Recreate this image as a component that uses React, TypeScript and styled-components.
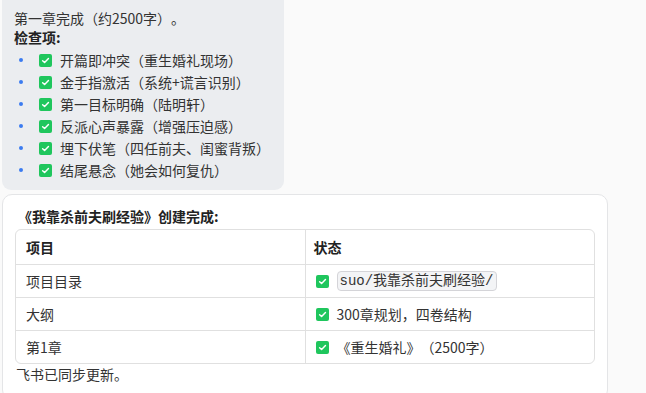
import React from "react";
import styled, { createGlobalStyle } from "styled-components";

const Global = createGlobalStyle`
  html, body { margin: 0; padding: 0; background: #fafafa; }
  body {
    font-family: "Noto Sans CJK SC", "Noto Sans", sans-serif;
    font-size: 14px;
    color: #333;
    text-spacing-trim: space-all;
  }
`;

const Page = styled.div`
  display: flex;
  flex-direction: column;
  align-items: flex-start;
  padding: 0 0 0 2px;
  gap: 4px;
  width: 646px;
  height: 393px;
  overflow: hidden;
  box-sizing: border-box;
`;

const Bubble = styled.div`
  width: 282px;
  box-sizing: border-box;
  background: #ebedf0;
  border-radius: 0 0 9px 9px;
  padding: 9px 12px 9px 12px;
`;

const Para = styled.div<{ $bold?: boolean }>`
  line-height: 19px;
  font-weight: ${(p) => (p.$bold ? 700 : 400)};
  color: ${(p) => (p.$bold ? "#222" : "#333")};
  white-space: nowrap;
`;

const List = styled.ul`
  list-style: none;
  margin: 2px 0 0 0;
  padding: 0;
`;

const Item = styled.li`
  display: flex;
  align-items: center;
  height: 22px;
  white-space: nowrap;
`;

const Bullet = styled.span`
  width: 4px;
  height: 4px;
  border-radius: 50%;
  background: #3b7bf0;
  margin: 0 16px 0 5px;
  flex: none;
`;

const CheckBox = styled.span`
  display: inline-flex;
  align-items: center;
  justify-content: center;
  width: 13px;
  height: 13px;
  border-radius: 2px;
  background: #1fc65d;
  flex: none;
  margin-right: 8px;
`;

const Card = styled.div`
  width: 606px;
  box-sizing: border-box;
  background: #fff;
  border: 1px solid #e4e5e7;
  border-radius: 10px;
  padding: 10px 12px 14px 12px;
  flex: none;
`;

const Heading = styled.div`
  font-weight: 700;
  color: #222;
  line-height: 22px;
  margin: 0 0 2px 3px;
`;

const TableWrap = styled.div`
  border: 1px solid #e0e0e0;
  border-radius: 6px;
  overflow: hidden;
`;

const Table = styled.table`
  width: 100%;
  border-collapse: collapse;
  table-layout: fixed;
`;

const Th = styled.th`
  text-align: left;
  font-weight: 700;
  color: #222;
  height: 34px;
  padding: 0 10px;
  border-bottom: 1px solid #e0e0e0;
  & + & { border-left: 1px solid #e0e0e0; padding-left: 8px; }
`;

const Td = styled.td`
  height: 32px;
  padding: 0 10px;
  color: #333;
  border-top: 1px solid #e0e0e0;
  & + & { border-left: 1px solid #e0e0e0; }
`;

const Cell = styled.div`
  display: flex;
  align-items: center;
  white-space: nowrap;
`;

const Code = styled.code`
  font-family: "Liberation Mono", "Noto Sans CJK SC", monospace;
  font-size: 14px;
  background: #f3f4f6;
  border: 1px solid #d4d4d8;
  border-radius: 4px;
  padding: 0 2px;
  line-height: 18px;
  color: #333;
`;

const Footer = styled.div`
  line-height: 22px;
  margin: -1px 0 0 1px;
  color: #333;
`;

const Check = () => (
  <CheckBox>
    <svg width="9" height="9" viewBox="0 0 10 10" fill="none">
      <path d="M1.8 5.2 L4 7.3 L8.3 2.8" stroke="#fff" strokeWidth="1.6" strokeLinecap="round" strokeLinejoin="round" />
    </svg>
  </CheckBox>
);

const items = [
  "开篇即冲突（重生婚礼现场）",
  "金手指激活（系统+谎言识别）",
  "第一目标明确（陆明轩）",
  "反派心声暴露（增强压迫感）",
  "埋下伏笔（四任前夫、闺蜜背叛）",
  "结尾悬念（她会如何复仇）",
];

export default function App() {
  return (
    <>
      <Global />
      <Page>
        <Bubble>
          <Para>第一章完成（约2500字）。</Para>
          <Para $bold>检查项:</Para>
          <List>
            {items.map((t) => (
              <Item key={t}>
                <Bullet />
                <Check />
                {t}
              </Item>
            ))}
          </List>
        </Bubble>
        <Card>
          <Heading>《我靠杀前夫刷经验》创建完成:</Heading>
          <TableWrap>
            <Table>
              <colgroup>
                <col style={{ width: "289px" }} />
                <col />
              </colgroup>
              <thead>
                <tr>
                  <Th>项目</Th>
                  <Th>状态</Th>
                </tr>
              </thead>
              <tbody>
                <tr>
                  <Td>项目目录</Td>
                  <Td>
                    <Cell>
                      <Check />
                      <Code>suo/我靠杀前夫刷经验/</Code>
                    </Cell>
                  </Td>
                </tr>
                <tr>
                  <Td>大纲</Td>
                  <Td>
                    <Cell>
                      <Check />
                      300章规划，四卷结构
                    </Cell>
                  </Td>
                </tr>
                <tr>
                  <Td>第1章</Td>
                  <Td>
                    <Cell>
                      <Check />
                      《重生婚礼》（2500字）
                    </Cell>
                  </Td>
                </tr>
              </tbody>
            </Table>
          </TableWrap>
          <Footer>飞书已同步更新。</Footer>
        </Card>
      </Page>
    </>
  );
}
